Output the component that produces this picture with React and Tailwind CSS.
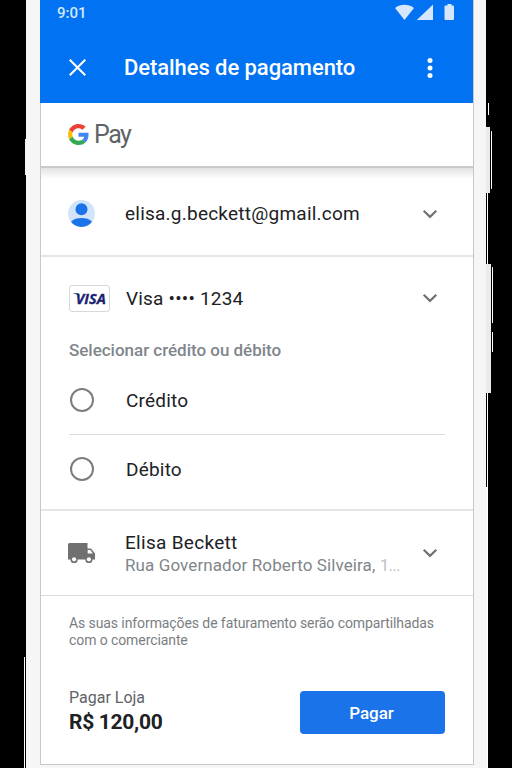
const Chevron = () => (
  <svg className="w-4 h-4 shrink-0 text-[#707377]" viewBox="0 0 16 16" fill="none" stroke="currentColor" strokeWidth="2.2">
    <path d="M1.7 4.7 8 10.9l6.3-6.2" />
  </svg>
);

const GoogleLogo = () => (
  <svg className="w-[21px] h-[21px] shrink-0" viewBox="0 0 48 48">
    <path fill="#ea4335" d="M24 9.5c3.54 0 6.71 1.22 9.21 3.6l6.85-6.85C35.9 2.38 30.47 0 24 0 14.62 0 6.51 5.38 2.56 13.22l7.98 6.19C12.43 13.72 17.74 9.5 24 9.5z" />
    <path fill="#4285f4" d="M46.98 24.55c0-1.57-.15-3.09-.38-4.55H24v9.02h12.94c-.58 2.96-2.26 5.48-4.78 7.18l7.73 6c4.51-4.18 7.09-10.36 7.09-17.65z" />
    <path fill="#fbbc05" d="M10.53 28.59c-.48-1.45-.76-2.99-.76-4.59s.27-3.14.76-4.59l-7.98-6.19C.92 16.46 0 20.12 0 24c0 3.88.92 7.54 2.56 10.78l7.97-6.19z" />
    <path fill="#34a853" d="M24 48c6.48 0 11.93-2.13 15.89-5.81l-7.73-6c-2.15 1.45-4.92 2.3-8.16 2.3-6.26 0-11.57-4.22-13.47-9.91l-7.98 6.19C6.51 42.62 14.62 48 24 48z" />
  </svg>
);

const Avatar = () => (
  <svg className="w-[27px] h-[27px] shrink-0" viewBox="0 0 27 27">
    <circle cx="13.5" cy="13.5" r="13.5" fill="#d2e3fc" />
    <circle cx="13.5" cy="9.2" r="6" fill="#1a73e8" />
    <path fill="#1a73e8" d="M3 21.8c2.5-2.8 6.4-3.8 10.5-3.8S21.5 19 24 21.8C21.6 25 17.9 27 13.5 27S5.4 25 3 21.8z" />
  </svg>
);

const Truck = () => (
  <svg className="w-[27px] h-5 shrink-0" viewBox="0 0 27 20" fill="#707070">
    <path d="M1.5 0H19.5V5.4H23L27 10.5V16.5H24.6a3.7 3.7 0 0 1-7.4 0H9.8a3.7 3.7 0 0 1-7.4 0H0V1.5A1.5 1.5 0 0 1 1.500 0z" />
    <path fill="#fff" d="M19.7 7h2.6l2.6 3.6h-5.2z" />
    <circle cx="6.1" cy="16.3" r="2.1" fill="#fff" />
    <circle cx="20.9" cy="16.3" r="2.1" fill="#fff" />
  </svg>
);

const VisaBadge = () => (
  <div className="w-[41px] h-[27px] shrink-0 rounded-[3px] border border-[#d8d8d8] flex items-center justify-center">
    <svg className="w-[39px] h-[25px] shrink-0" viewBox="0 0 39 25">
      <text x="5.8" y="17.8" fontFamily="Open Sans, sans-serif" fontSize="14.5" fontWeight="700" fontStyle="italic" fill="#1a1f71" stroke="#1a1f71" strokeWidth="0.3" textLength="30" lengthAdjust="spacingAndGlyphs">VISA</text>
      <path d="M3 7.2h4.500q1.200 0 1.500 1l.6 2.600C8 8.700 6 7.900 3 7.500z" fill="#1a1f71" />
    </svg>
  </div>
);

const StatusBar = () => (
  <div className="h-[31px] pl-[17px] pr-[18px] flex items-start justify-between text-[#d5e6fd]">
    <span className="pt-[3px] text-[15px] leading-5 font-medium">9:01</span>
    <svg className="w-[60px] h-4 mt-1" viewBox="0 0 60 16" fill="currentColor">
      <path d="M0 4C5.500-.4 13.500-.4 19 4L9.500 16z" />
      <path d="M38 .5V16H21.800z" />
      <path d="M52.500 0h4v1.500h1.500q1 0 1 1V15q0 1-1 1h-7.500q-1 0-1-1V2.500q0-1 1-1h2z" />
    </svg>
  </div>
);

const Option = ({ label }) => (
  <label className="h-[68px] flex items-center text-[19px] tracking-[0.2px] text-[#202124]">
    <span className="w-6 h-6 ml-px mr-8 rounded-full border-2 border-[#7b7d80]" />
    <span className="pt-[2px]">{label}</span>
  </label>
);

// Left edge of the phone frame
const LeftRail = () => (
  <div className="w-[26px] shrink-0 flex flex-col items-end">
    <div className="h-[139px]" />
    <div className="w-px h-9 bg-[#f4f4f4]" />
    <div className="h-[482px]" />
    <div className="w-px mr-px flex-1 bg-white" />
  </div>
);

// Right edge, with the power and volume keys
const RightRail = () => (
  <div className="w-[26px] shrink-0 flex flex-col items-start">
    <div className="h-[103px]" />
    <div className="w-px h-3 ml-[2px] bg-white" />
    <div className="h-3" />
    <div className="h-[66px] flex items-start">
      <div className="w-[4px] h-full bg-[#ebebeb]" />
      <div className="w-px mt-1 ml-px h-[58px] bg-white" />
    </div>
    <div className="w-px h-[71px] ml-px bg-white" />
    <div className="h-[129px] flex items-start">
      <div className="w-[5px] h-full bg-[#ebebeb]" />
      <div className="ml-px mt-[3px] w-px flex flex-col">
        <div className="h-14 bg-white" />
        <div className="h-[9px]" />
        <div className="h-5 bg-white" />
      </div>
    </div>
    <div className="w-px h-[94px] ml-px bg-white" />
    <div className="w-[2px] flex-1 bg-[#f6f6f6] border-r border-white" />
  </div>
);

const App = () => {
  return (
    <div className="w-[512px] h-[768px] overflow-hidden bg-black flex font-['Roboto',sans-serif]">
      <LeftRail />
      <div className="w-[460px] shrink-0 bg-[#f6f6f6] pl-[14px] pr-3">
        <div className="h-[765px] border-x border-b border-[#c8c8c8] bg-white">
          <header className="h-[103px] -ml-px bg-[#0072f2] text-white">
            <StatusBar />
            <div className="h-[72px] pl-[29px] pr-9 flex items-center">
              <svg className="w-[17px] h-[17px] mt-px" viewBox="0 0 17 17" fill="none" stroke="currentColor" strokeWidth="2.1">
                <path d="m.7.7 15.6 15.6M16.3.7.7 16.3" />
              </svg>
              <h1 className="ml-[38px] pt-px text-[22px] leading-7 font-medium tracking-[-0.07px]">Detalhes de pagamento</h1>
              <svg className="w-[14px] h-5 ml-auto mt-px" viewBox="0 0 14 20" fill="currentColor">
                <circle cx="7" cy="2.6" r="2.5" />
                <circle cx="7" cy="10" r="2.5" />
                <circle cx="7" cy="17.4" r="2.5" />
              </svg>
            </div>
          </header>

          <div className="h-[65px] pl-[27px] flex items-center border-b-2 border-[#c9c9c9]">
            <GoogleLogo />
            <span className="ml-[5px] pt-px text-[25px] leading-8 tracking-[-1.5px] text-[#5f6368]">Pay</span>
          </div>
          <div className="h-[11px] bg-linear-to-b from-[#e3e3e3] to-white" />

          <div className="h-[78px] pl-[27px] pr-[35px] pb-[7px] flex items-center border-b-2 border-[#e5e5e5]">
            <Avatar />
            <span className="ml-[30px] pt-px text-[19px] tracking-[0.23px] text-[#202124]">elisa.g.beckett@gmail.com</span>
            <span className="ml-auto"><Chevron /></span>
          </div>

          <section className="h-[254px] pl-7 pr-7 border-b-2 border-[#e5e5e5]">
            <div className="h-[82px] pr-[7px] flex items-center">
              <VisaBadge />
              <span className="ml-4 pt-[2px] text-[19px] tracking-[0.2px] text-[#202124]">Visa •••• 1234</span>
              <span className="ml-auto"><Chevron /></span>
            </div>
            <p className="h-[27px] text-[17px] leading-[23px] font-medium tracking-[-0.02px] text-[#80868b]">Selecionar crédito ou débito</p>
            <Option label="Crédito" />
            <div className="h-px bg-[#dadce0]" />
            <Option label="Débito" />
          </section>

          <div className="h-[85px] pl-[27px] pr-[35px] flex items-center border-b border-[#dadada]">
            <Truck />
            <div className="ml-[30px] pt-[2px] leading-[23px]">
              <p className="text-[19px] tracking-[0.3px] text-[#202124]">Elisa Beckett</p>
              <p className="text-[17px] tracking-[0.1px] text-[#80868b] whitespace-nowrap">
                Rua Governador Roberto Silveira, <span className="tracking-[-0.7px] text-[#bfc2c5]">1...</span>
              </p>
            </div>
            <span className="ml-auto"><Chevron /></span>
          </div>

          <footer className="px-7 pt-[19px]">
            <p className="text-[14px] leading-[17px] tracking-[-0.09px] text-[#7a7e82] whitespace-nowrap">
              As suas informações de faturamento serão compartilhadas
              <br />
              com o comerciante
            </p>
            <div className="mt-[42px] flex items-start justify-between">
              <div>
                <p className="text-[16px] leading-[14px] text-[#5f6368]">Pagar Loja</p>
                <p className="mt-1 text-[21px] leading-[26px] font-bold tracking-[-0.3px] text-[#202124]">R$ 120,00</p>
              </div>
              <button className="w-[145px] h-[43px] rounded-[4px] bg-[#1a73e8] pt-[2px] pr-[2px] text-[17px] font-medium text-white">Pagar</button>
            </div>
          </footer>
        </div>
      </div>
      <RightRail />
    </div>
  );
};

export default App;
